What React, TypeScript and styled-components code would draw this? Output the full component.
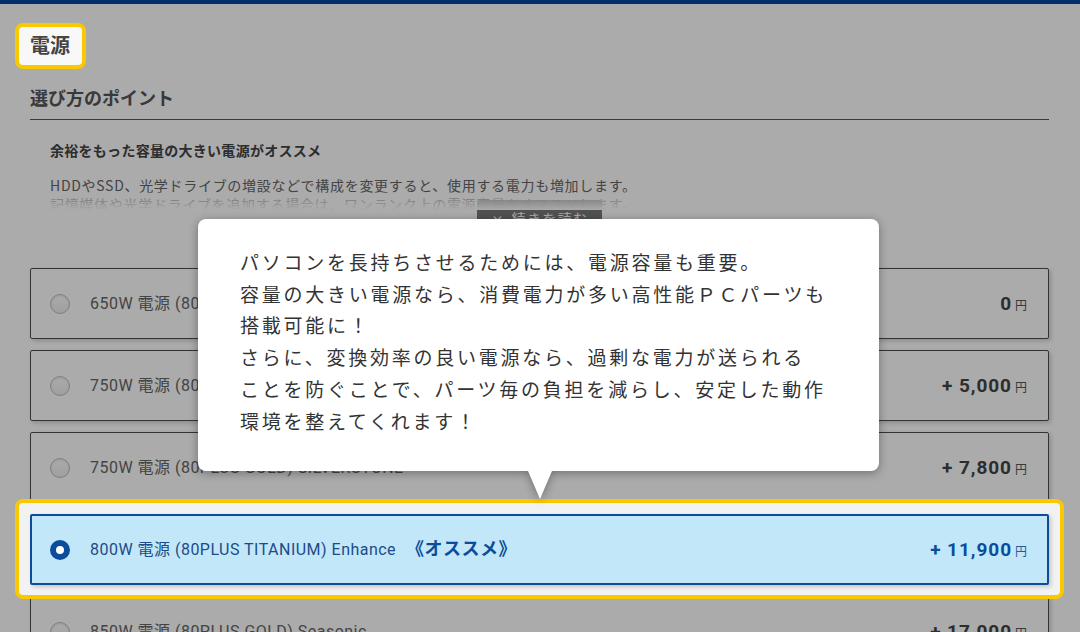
import styled, { createGlobalStyle, css } from 'styled-components';
import { ChevronDown } from 'lucide-react';

type PsuOption = {
  id: string;
  label: string;
  price: string;
  recommended?: boolean;
};

const options: PsuOption[] = [
  { id: 'p650', label: '650W 電源 (80PLUS BRONZE)', price: '0' },
  { id: 'p750b', label: '750W 電源 (80PLUS GOLD)', price: '+ 5,000' },
  { id: 'p750s', label: '750W 電源 (80PLUS GOLD) SILVERSTONE', price: '+ 7,800' },
  { id: 'p800', label: '800W 電源 (80PLUS TITANIUM) Enhance', price: '+ 11,900', recommended: true },
  { id: 'p850', label: '850W 電源 (80PLUS GOLD) Seasonic', price: '+ 17,000' },
];

const selectedId = 'p800';

const GlobalStyle = createGlobalStyle`
  * {
    box-sizing: border-box;
  }

  html,
  body {
    margin: 0;
    padding: 0;
    overflow: hidden;
    background: #ffffff;
  }

  body {
    font-family: "Noto Sans CJK JP", "Noto Sans", sans-serif;
    color: #333333;
  }
`;

const Page = styled.div`
  position: relative;
  width: 1080px;
  height: 632px;
  overflow: hidden;
`;

const TopBar = styled.div`
  height: 4px;
  background: #00489e;
`;

const Content = styled.main`
  padding: 0 31px 0 30px;
`;

const Overlay = styled.div`
  position: absolute;
  inset: 0;
  z-index: 10;
  background: rgba(0, 0, 0, 0.33);
`;

const SectionTitle = styled.h2`
  position: relative;
  z-index: 20;
  width: fit-content;
  margin: 19px 0 0 -15px;
  padding: 6px 12px 8px 11px;
  border: 4px solid #f8c800;
  border-radius: 8px;
  background: #f8f8f8;
  font-size: 20px;
  line-height: 24px;
  font-weight: 700;
  color: #444444;
`;

const PointHeading = styled.h3`
  margin: 17px 0 0;
  padding-bottom: 11px;
  border-bottom: 1px solid #555555;
  font-size: 18px;
  line-height: 22px;
  font-weight: 700;
  color: #555555;
`;

const PointBody = styled.section`
  padding: 0 20px;

  .point-title {
    margin: 21px 0 0;
    font-size: 14px;
    line-height: 19px;
    font-weight: 700;
    letter-spacing: 0.02em;
    color: #444444;
  }
`;

const DescClip = styled.div`
  position: relative;
  height: 34px;
  margin-top: 16px;
  overflow: hidden;

  p {
    margin: 0;
    font-size: 14px;
    line-height: 19px;
    letter-spacing: 0.05em;
    color: #666666;
  }

  &::after {
    content: '';
    position: absolute;
    left: 0;
    right: 0;
    bottom: 0;
    height: 18px;
    background: linear-gradient(rgba(255, 255, 255, 0.3), #ffffff);
  }
`;

const ReadMore = styled.button`
  display: flex;
  align-items: center;
  justify-content: center;
  gap: 8px;
  width: 125px;
  height: 36px;
  margin: -10px auto 0;
  border: none;
  border-radius: 4px;
  background: #7a7a7a;
  color: #ffffff;
  font-family: inherit;
  font-size: 14px;
  letter-spacing: 0.1em;
`;

const OptionList = styled.ul`
  display: flex;
  flex-direction: column;
  gap: 11px;
  margin: 32px 0 0;
  padding: 0;
  list-style: none;
`;

const OptionItem = styled.li<{ $spotlight: boolean }>`
  ${(p) =>
    p.$spotlight &&
    css`
      position: relative;
      z-index: 20;
      margin: -15px -15px -14px;
      padding: 11px 11px 10px;
      border: 4px solid #f8c800;
      border-radius: 8px;
      background: #f2f2f2;
    `}
`;

const OptionCard = styled.label<{ $checked: boolean }>`
  display: flex;
  align-items: center;
  height: 71px;
  padding: 0 21px 0 19px;
  border: 1px solid #4d4d4d;
  border-radius: 2px;
  background: #ffffff;
  box-shadow: 2px 2px 4px rgba(0, 0, 0, 0.18);
  font-family: Roboto, "Noto Sans CJK JP", sans-serif;
  color: #666666;

  ${(p) =>
    p.$checked &&
    css`
      padding: 0 20px 0 18px;
      border: 2px solid #0c4d9b;
      background: #c2e7f9;
      color: #1c4b88;
    `}
`;

const Radio = styled.span<{ $checked: boolean }>`
  flex-shrink: 0;
  width: 20px;
  height: 20px;
  border: 1px solid #bdbdbd;
  border-radius: 50%;
  background: linear-gradient(#ffffff, #eeeeee);
  box-shadow: inset 0 1px 2px rgba(0, 0, 0, 0.12);

  ${(p) =>
    p.$checked &&
    css`
      border: 6px solid #0c4d9b;
      background: #ffffff;
      box-shadow: none;
    `}
`;

const OptionLabel = styled.span`
  margin-left: 20px;
  font-size: 16px;
  line-height: 20px;
  letter-spacing: 0.03em;
  white-space: nowrap;

  strong {
    margin-left: 10px;
    font-size: 18px;
    font-weight: 700;
    color: #0c4d9b;
  }
`;

const Price = styled.span<{ $checked: boolean }>`
  margin-left: auto;
  font-size: 19px;
  font-weight: 700;
  letter-spacing: 0.05em;
  color: ${(p) => (p.$checked ? '#0c4d9b' : '#444444')};

  small {
    margin-left: 3px;
    font-size: 12px;
    font-weight: 400;
    letter-spacing: 0;
    color: ${(p) => (p.$checked ? '#2a5a98' : '#555555')};
  }
`;

const Tooltip = styled.div`
  position: absolute;
  left: 198px;
  top: 219px;
  z-index: 30;
  width: 681px;
  height: 252px;
  padding: 27px 20px 0 42px;
  border-radius: 8px;
  background: #ffffff;
  filter: drop-shadow(0 2px 5px rgba(0, 0, 0, 0.35));
  font-size: 19px;
  line-height: 31.7px;
  letter-spacing: 0.145em;
  color: #333333;
  white-space: nowrap;

  &::after {
    content: '';
    position: absolute;
    left: 330px;
    top: 100%;
    border-left: 12px solid transparent;
    border-right: 12px solid transparent;
    border-top: 28px solid #ffffff;
  }
`;

export default function App() {
  return (
    <Page>
      <GlobalStyle />
      <TopBar />
      <Content>
        <SectionTitle>電源</SectionTitle>
        <PointHeading>選び方のポイント</PointHeading>
        <PointBody>
          <h4 className="point-title">余裕をもった容量の大きい電源がオススメ</h4>
          <DescClip>
            <p>
              HDDやSSD、光学ドライブの増設などで構成を変更すると、使用する電力も増加します。
              <br />
              記憶媒体や光学ドライブを追加する場合は、ワンランク上の電源容量をオススメします。
            </p>
          </DescClip>
          <ReadMore type="button">
            <ChevronDown size={13} strokeWidth={2.5} />
            続きを読む
          </ReadMore>
        </PointBody>
        <OptionList>
          {options.map((option) => {
            const checked = option.id === selectedId;
            return (
              <OptionItem key={option.id} $spotlight={checked}>
                <OptionCard $checked={checked}>
                  <Radio $checked={checked} />
                  <OptionLabel>
                    {option.label}
                    {option.recommended && <strong>《オススメ》</strong>}
                  </OptionLabel>
                  <Price $checked={checked}>
                    {option.price}
                    <small>円</small>
                  </Price>
                </OptionCard>
              </OptionItem>
            );
          })}
        </OptionList>
      </Content>
      <Overlay />
      <Tooltip>
        パソコンを長持ちさせるためには、電源容量も重要。
        <br />
        容量の大きい電源なら、消費電力が多い高性能ＰＣパーツも
        <br />
        搭載可能に！
        <br />
        さらに、変換効率の良い電源なら、過剰な電力が送られる
        <br />
        ことを防ぐことで、パーツ毎の負担を減らし、安定した動作
        <br />
        環境を整えてくれます！
      </Tooltip>
    </Page>
  );
}
